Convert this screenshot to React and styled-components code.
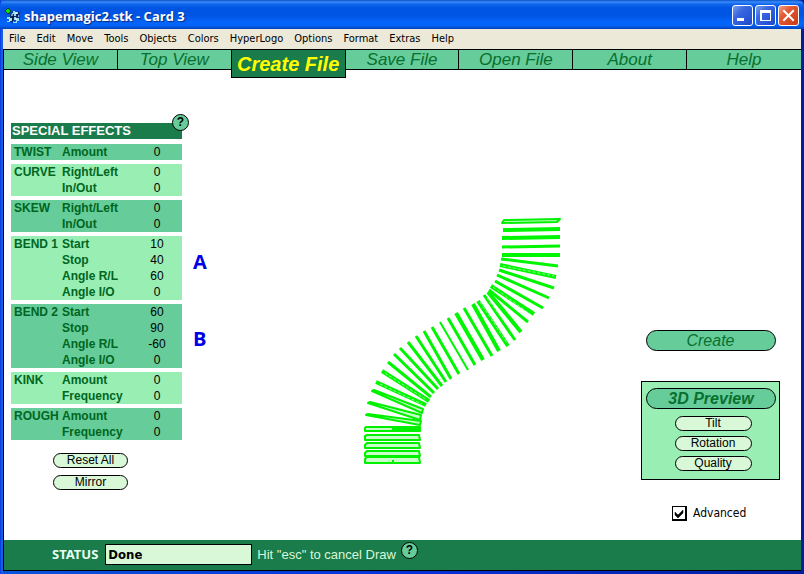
import React, { useState } from "react";
import styled, { createGlobalStyle } from "styled-components";

const ui = '"DejaVu Sans Condensed", "Noto Sans", sans-serif';
const arial = '"Liberation Sans", Arial, sans-serif';

const GlobalStyle = createGlobalStyle`
  * { box-sizing: border-box; }
  body { margin: 0; background: #fff; font-family: ${arial}; }
  button, input { font: inherit; color: inherit; }
`;

const Window = styled.div`
  display: flex;
  flex-direction: column;
  min-height: 100vh;
  padding: 0 3px 3px;
  background: linear-gradient(90deg, #0831d9 0, #166aee 2px, #0855dd 3px, #0831d9 50%, #001ea0 100%);
`;

const TitleBar = styled.header`
  display: flex;
  align-items: center;
  gap: 3px;
  height: 29px;
  margin: 0 -3px;
  padding: 2px 5px 0;
  color: #fff;
  border-radius: 6px 6px 0 0;
  background: linear-gradient(#0a50c8 0, #3a8cf8 2px, #1068ee 4px, #0054e3 8px, #0054e3 15px, #0566fc 23px, #0560f2 26px, #0040b8 29px);
`;

const Title = styled.h1`
  flex: 1;
  margin: 0;
  font: bold 13px/18px "Open Sans", "Noto Sans", sans-serif;
  text-shadow: 1px 1px 1px #0a2a80;
`;

const WindowButtons = styled.div`
  display: flex;
  gap: 2px;
`;

const WindowButton = styled.button`
  display: grid;
  place-items: center;
  width: 21px;
  height: 21px;
  padding: 0;
  border: 1px solid #fff;
  border-radius: 3px;
  background: ${(p) =>
    p.$close
      ? "linear-gradient(135deg, #f0a088, #e35a35 35%, #c83a14)"
      : "linear-gradient(135deg, #7a9ff0, #3a68e0 35%, #1c48cc)"};
`;

const MenuBar = styled.nav`
  display: flex;
  flex-wrap: wrap;
  gap: 11px;
  min-height: 20px;
  padding: 0 6px;
  background: #ece9d8;
`;

const MenuItem = styled.button`
  padding: 0;
  border: 0;
  background: none;
  color: #000;
  font: 11px/18px ${ui};
`;

const Client = styled.div`
  flex: 1;
  display: flex;
  flex-direction: column;
  background: #fff;
  border-left: 1px solid #000;
  border-bottom: 1px solid #000;
`;

const Tabs = styled.nav`
  display: grid;
  grid-template-columns: repeat(7, 1fr);
  align-items: start;
  height: 21px;
`;

const Tab = styled.button`
  height: ${(p) => (p.$active ? 29 : 21)}px;
  padding: 0;
  border: 1px solid #000;
  border-width: ${(p) => (p.$active ? "1px" : "1px 1px 1px 0")};
  margin-left: ${(p) => (p.$active ? -1 : 0)}px;
  background: ${(p) => (p.$active ? "#1a7b4b" : "#66cc99")};
  color: ${(p) => (p.$active ? "#ffff00" : "#087030")};
  font: italic ${(p) => (p.$active ? "bold 20px/26px" : "17px/19px")} ${arial};
  white-space: nowrap;
  &:last-child { border-right: 0; }
`;

const Main = styled.main`
  flex: 1;
  display: grid;
  grid-template-columns: 281px 1fr 139px;
  padding: 0 21px 19px 0;
`;

const Sidebar = styled.section`
  width: 171px;
  margin: 53px 0 0 7px;
`;

const PanelHeader = styled.div`
  position: relative;
  margin-bottom: 5px;
  background: #1a7b4b;
`;

const PanelTitle = styled.h2`
  margin: 0;
  padding-left: 1px;
  color: #fff;
  font: bold 13px/16px ${arial};
`;

const HelpButton = styled.button`
  width: 17px;
  height: 17px;
  padding: 0;
  border: 1px solid #000;
  border-radius: 50%;
  background: #66cc99;
  color: #000;
  font: bold 12px/15px ${arial};
`;

const CornerHelp = styled(HelpButton)`
  position: absolute;
  top: -9px;
  right: -7px;
`;

const EffectsTable = styled.table`
  display: grid;
  gap: 4px;
  font: bold 12px/16px ${arial};
  color: #006622;
`;

const EffectGroup = styled.tbody`
  display: block;
  position: relative;
  background: ${(p) => (p.$light ? "#99eeb4" : "#66cc99")};
`;

const EffectRow = styled.tr`
  display: grid;
  grid-template-columns: 48px 1fr 50px;
  padding-left: 3px;
`;

const EffectName = styled.th`
  padding: 0;
  text-align: left;
`;

const EffectLabel = styled.td`
  padding: 0;
`;

const EffectValue = styled.td`
  padding: 0;
  color: #000;
  font-weight: normal;
  text-align: center;
`;

const Marker = styled.td`
  position: absolute;
  left: 182px;
  top: ${(p) => p.$top}px;
  padding: 0;
  color: #0000e6;
  font: bold 20px/24px "Open Sans", "Noto Sans", sans-serif;
`;

const SmallButton = styled.button`
  width: ${(p) => p.$width}px;
  height: 15px;
  padding: 0;
  border: 1px solid #000;
  border-radius: 8px;
  background: #d8f8d8;
  color: #000;
  font: 12px/13px ${arial};
`;

const SidebarActions = styled.div`
  display: grid;
  justify-items: center;
  gap: 7px;
  margin-top: 13px;
  padding-right: 12px;
`;

const Stage = styled.figure`
  margin: 144px 0 0;
  text-align: center;
`;

const Drawing = styled.svg`
  width: 206px;
  height: 254px;
`;

const Tools = styled.aside`
  display: flex;
  flex-direction: column;
  justify-content: flex-end;
`;

const LargeButton = styled.button`
  width: 130px;
  height: 21px;
  padding: 0;
  border: 1px solid #000;
  border-radius: 11px;
  background: #66cc99;
  color: #087030;
  font: italic ${(p) => (p.$bold ? "bold" : "normal")} 16px/19px ${arial};
`;

const CreateRow = styled.div`
  display: flex;
  justify-content: center;
  margin-bottom: 30px;
`;

const PreviewPanel = styled.section`
  display: flex;
  flex-direction: column;
  align-items: center;
  gap: 7px;
  padding: 6px 3px 8px 4px;
  border: 1px solid #000;
  background: #99eeb4;
`;

const PreviewActions = styled.div`
  display: grid;
  gap: 5px;
  padding-left: 4px;
`;

const AdvancedLabel = styled.label`
  display: flex;
  align-items: center;
  gap: 6px;
  margin: 26px 0 0 31px;
  font: 12px/15px ${ui};
`;

const CheckBox = styled.input`
  appearance: none;
  width: 15px;
  height: 15px;
  margin: 0;
  border: 1px solid #000;
  border-width: 1px 2px 2px 1px;
  background: #fff;
`;

const CheckHolder = styled.span`
  position: relative;
  display: grid;
`;

const Tick = styled.svg`
  position: absolute;
  inset: 0;
  pointer-events: none;
`;

const StatusBar = styled.footer`
  display: flex;
  align-items: flex-start;
  height: 30px;
  padding: 4px 0 0 48px;
  background: #1a7b4b;
  color: #d8f8d8;
`;

const StatusLabel = styled.label`
  padding-right: 7px;
  color: #e8fff0;
  font: bold 13px/21px "Noto Sans", sans-serif;
`;

const StatusInput = styled.input`
  width: 147px;
  height: 21px;
  padding: 0 2px;
  border: 1px solid #000;
  background: #d8f8d8;
  color: #000;
  font: bold 13px/19px ${ui};
`;

const StatusHint = styled.span`
  padding: 0 5px;
  font: 13px/22px ${arial};
`;

const StatusHelp = styled(HelpButton)`
  margin-top: -2px;
`;

const menus = ["File", "Edit", "Move", "Tools", "Objects", "Colors", "HyperLogo", "Options", "Format", "Extras", "Help"];
const tabs = ["Side View", "Top View", "Create File", "Save File", "Open File", "About", "Help"];

const effects = [
  { name: "TWIST", rows: [["Amount", 0]] },
  { name: "CURVE", rows: [["Right/Left", 0], ["In/Out", 0]] },
  { name: "SKEW", rows: [["Right/Left", 0], ["In/Out", 0]] },
  { name: "BEND 1", rows: [["Start", 10], ["Stop", 40], ["Angle R/L", 60], ["Angle I/O", 0]], marker: "A", top: 14 },
  { name: "BEND 2", rows: [["Start", 60], ["Stop", 90], ["Angle R/L", -60], ["Angle I/O", 0]], marker: "B", top: 23 },
  { name: "KINK", rows: [["Amount", 0], ["Frequency", 0]] },
  { name: "ROUGH", rows: [["Amount", 0], ["Frequency", 0]] },
];

// Solid slats of the bent column: x1, y1, x2, y2, thickness
const slats = [
  [503, 230, 560, 229, 4], [502, 238, 560, 237, 4], [502, 247, 560, 246, 3],
  [502, 255, 560, 255, 4], [501, 259, 558, 266, 3], [500, 265, 556, 277, 4],
  [499, 270, 554, 288, 3], [497, 275, 549, 298, 3], [495, 281, 543, 308, 3],
  [491, 286, 534, 314, 4], [489, 290, 528, 322, 3], [488, 292, 521, 332, 4],
  [484, 295, 515, 340, 3], [478, 301, 508, 346, 4], [473, 304, 499, 351, 4],
  [464, 308, 492, 356, 3], [456, 313, 483, 360, 4], [448, 318, 475, 365, 3],
  [440, 322, 468, 370, 2], [432, 327, 459, 374, 3], [424, 331, 451, 379, 3],
  [416, 336, 446, 382, 3], [408, 342, 442, 386, 3], [400, 348, 438, 389, 3],
  [394, 354, 434, 393, 3], [388, 362, 431, 397, 3], [382, 371, 429, 401, 4],
  [376, 382, 426, 405, 4],
];

const openSlats = [
  "502,223 504,220 560,219 557,222",
  "372,391 374,390 423,409 422,413",
  "368,403 370,402 421,415 420,420",
  "366,415 368,414 421,421 420,425",
  "365,428 366,427 420,427 420,431 365,431",
  "365,436 367,435 419,435 420,440 365,440",
  "365,445 367,443 419,443 420,448 365,448",
  "365,453 367,451 419,451 420,456 365,456",
  "365,459 367,457 419,457 420,463 365,463",
];

// Hollow seams between the paired edges of the tighter slats
const seams = [
  [503, 266, 554, 276], [493, 287, 530, 314], [487, 298, 514, 335],
  [480, 302, 507, 343], [385, 373, 425, 399], [380, 384, 422, 404],
];

function BentColumn() {
  return (
    <Drawing viewBox="360 214 206 254" role="img" aria-label="Bent column preview">
      {openSlats.map((points) => (
        <polygon key={points} points={points} fill="#c8ffc8" stroke="#00f000" strokeWidth="2" strokeLinejoin="round" />
      ))}
      <path d="M392 429H420M366 457H419M393 460v3" stroke="#00f000" strokeWidth="2" fill="none" />
      {slats.map(([x1, y1, x2, y2, w]) => (
        <line key={`${x1}-${y1}`} x1={x1} y1={y1} x2={x2} y2={y2} stroke="#00f500" strokeWidth={w} strokeLinecap="butt" />
      ))}
      {seams.map(([x1, y1, x2, y2]) => (
        <line key={`${x1}-${y1}`} x1={x1} y1={y1} x2={x2} y2={y2} stroke="#b8ffb8" strokeWidth="0.8" strokeDasharray="3 2" />
      ))}
    </Drawing>
  );
}

function AppIcon() {
  return (
    <svg width="16" height="16" viewBox="0 0 16 16" aria-hidden="true">
      <path d="M3 0l3 3-3 3-3-3z" fill="#18d818" stroke="#042" strokeWidth="1" />
      <path d="M5 6l3-3 2 2 3-2 2 2-2 3 2 2-2 3-3-1-3 3-3-2 1-3z" fill="#103070" />
      <path d="M8 3h2v1h3v2h-2v2H9V6H7V5h1M2 9h3v1h2v3H5v1H2v-1h2v-2H2M9 9h2v1h3v3h-2v2h-3v-1h2v-2H9" fill="#9adcf8" />
      <path d="M10 5h2M4 12h2M10 11h2M6 7h2M13 8h1M8 14h1" stroke="#fff" strokeWidth="1" />
      <path d="M7 9h2M12 7h1M7 12h1" stroke="#000" strokeWidth="1" />
    </svg>
  );
}

export default function App() {
  const [advanced, setAdvanced] = useState(true);
  const [status, setStatus] = useState("Done");
  return (
    <>
      <GlobalStyle />
      <Window>
        <TitleBar>
          <AppIcon />
          <Title>shapemagic2.stk - Card 3</Title>
          <WindowButtons>
            <WindowButton aria-label="Minimize">
              <svg width="19" height="19"><path d="M4 12h7v3H4z" fill="#fff" /></svg>
            </WindowButton>
            <WindowButton aria-label="Maximize">
              <svg width="19" height="19"><path d="M4 4h11v11H4zM6 7v7h8V7z" fill="#fff" fillRule="evenodd" /></svg>
            </WindowButton>
            <WindowButton $close aria-label="Close">
              <svg width="19" height="19"><path d="M5 5l9 9M14 5l-9 9" stroke="#fff" strokeWidth="2" strokeLinecap="square" /></svg>
            </WindowButton>
          </WindowButtons>
        </TitleBar>
        <MenuBar aria-label="Application menu">
          {menus.map((m) => <MenuItem key={m}>{m}</MenuItem>)}
        </MenuBar>
        <Client>
          <Tabs aria-label="Views">
            {tabs.map((t) => <Tab key={t} $active={t === "Create File"}>{t}</Tab>)}
          </Tabs>
          <Main>
            <Sidebar>
              <PanelHeader>
                <PanelTitle>SPECIAL EFFECTS</PanelTitle>
                <CornerHelp aria-label="Special effects help">?</CornerHelp>
              </PanelHeader>
              <EffectsTable>
                {effects.map((group, i) => (
                  <EffectGroup key={group.name} $light={i % 2 === 1}>
                    {group.rows.map(([label, value], r) => (
                      <EffectRow key={label}>
                        <EffectName scope="row">{r === 0 ? group.name : ""}</EffectName>
                        <EffectLabel>{label}</EffectLabel>
                        <EffectValue>{value}</EffectValue>
                        {r === 0 && group.marker && <Marker $top={group.top}>{group.marker}</Marker>}
                      </EffectRow>
                    ))}
                  </EffectGroup>
                ))}
              </EffectsTable>
              <SidebarActions>
                <SmallButton $width={75}>Reset All</SmallButton>
                <SmallButton $width={75}>Mirror</SmallButton>
              </SidebarActions>
            </Sidebar>
            <Stage><BentColumn /></Stage>
            <Tools>
              <CreateRow><LargeButton>Create</LargeButton></CreateRow>
              <PreviewPanel>
                <LargeButton $bold>3D Preview</LargeButton>
                <PreviewActions>
                  <SmallButton $width={77}>Tilt</SmallButton>
                  <SmallButton $width={77}>Rotation</SmallButton>
                  <SmallButton $width={77}>Quality</SmallButton>
                </PreviewActions>
              </PreviewPanel>
              <AdvancedLabel>
                <CheckHolder>
                  <CheckBox type="checkbox" checked={advanced} onChange={(e) => setAdvanced(e.target.checked)} />
                  {advanced && (
                    <Tick width="15" height="15" aria-hidden="true">
                      <path d="M3 6l3 3 5-5v3l-5 5-3-3z" fill="#000" stroke="#000" strokeWidth="0.5" />
                    </Tick>
                  )}
                </CheckHolder>
                Advanced
              </AdvancedLabel>
            </Tools>
          </Main>
          <StatusBar>
            <StatusLabel htmlFor="status">STATUS</StatusLabel>
            <StatusInput id="status" value={status} onChange={(e) => setStatus(e.target.value)} />
            <StatusHint>Hit "esc" to cancel Draw</StatusHint>
            <StatusHelp aria-label="Status help">?</StatusHelp>
          </StatusBar>
        </Client>
      </Window>
    </>
  );
}
